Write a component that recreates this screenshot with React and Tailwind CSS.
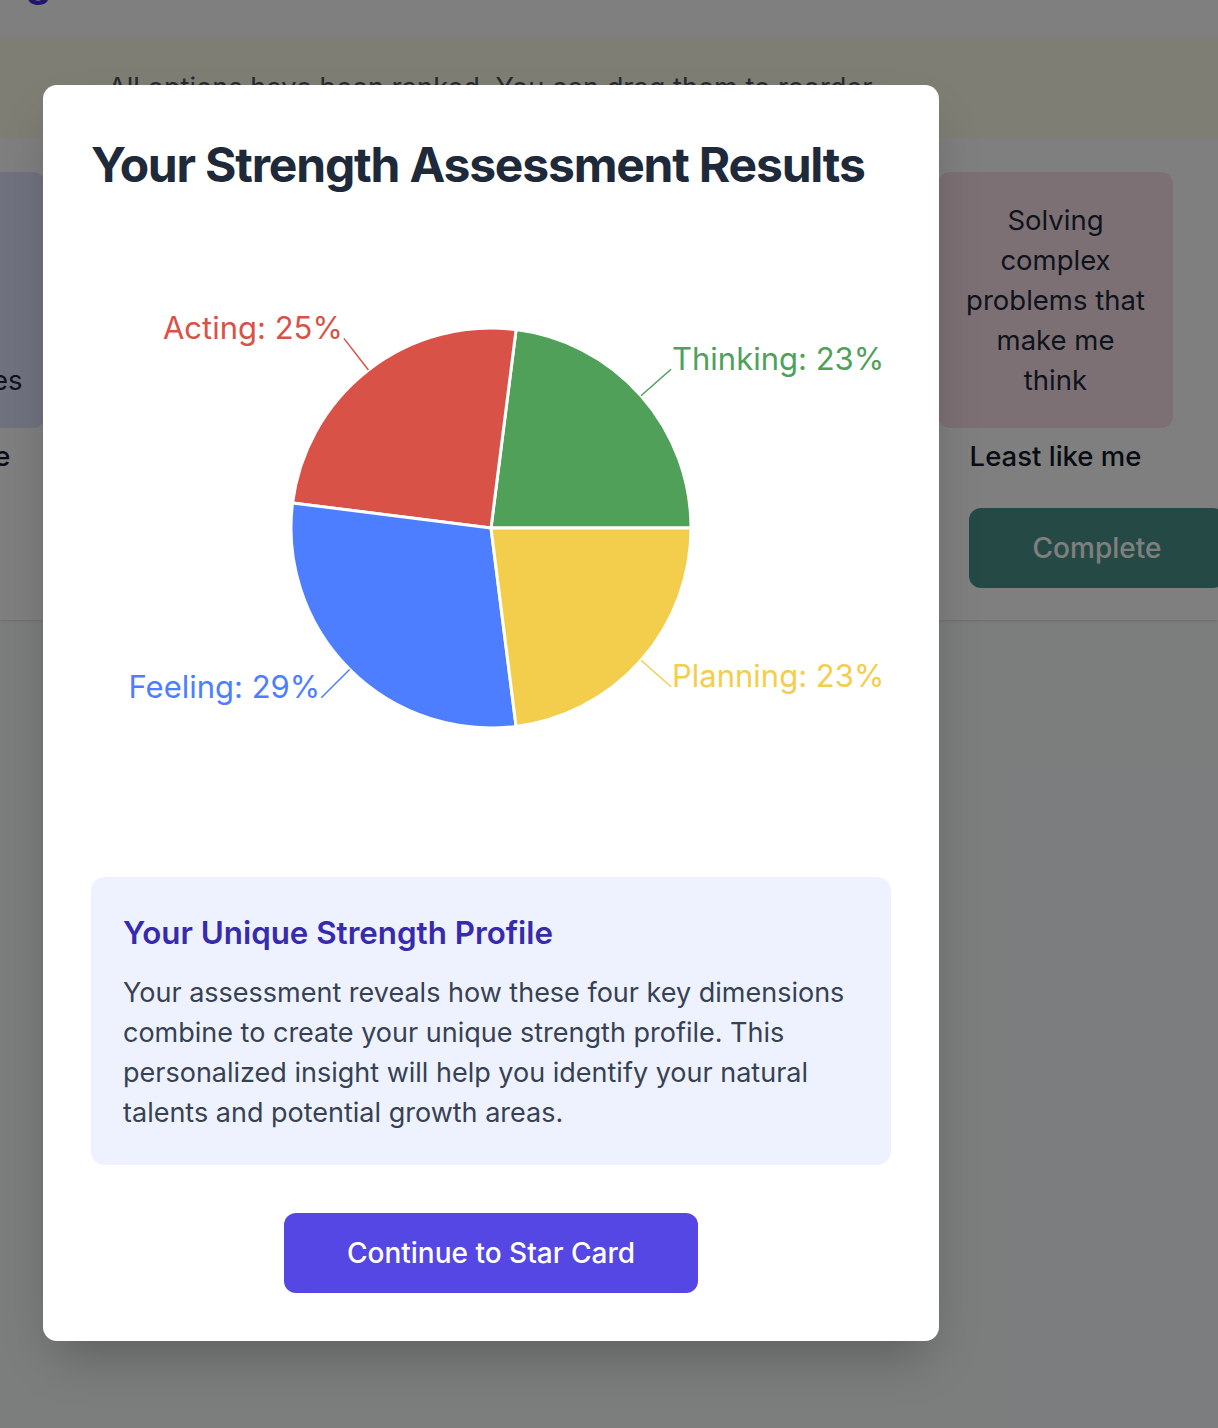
import React from "react";

const slices = [
  { name: "Thinking", pct: 23, color: "#50a05a" },
  { name: "Acting", pct: 25, color: "#d95247" },
  { name: "Feeling", pct: 29, color: "#4d7eff" },
  { name: "Planning", pct: 23, color: "#f3ce4c" },
];

function Pie() {
  const cx = 400, cy = 300, r = 200;
  let start = 0;
  const pt = (a, rad) => [cx + rad * Math.cos((a * Math.PI) / 180), cy - rad * Math.sin((a * Math.PI) / 180)];
  return (
    <svg width="800" height="600" viewBox="0 0 800 600" className="block">
      {slices.map((s) => {
        const sweep = (s.pct / 100) * 360;
        const a0 = start, a1 = start + sweep;
        start = a1;
        const [x0, y0] = pt(a0, r);
        const [x1, y1] = pt(a1, r);
        const large = sweep > 180 ? 1 : 0;
        const mid = (a0 + a1) / 2;
        const [lx0, ly0] = pt(mid, r);
        const [lx1, ly1] = pt(mid, r + 40);
        const right = Math.cos((mid * Math.PI) / 180) > 0;
        return (
          <g key={s.name}>
            <path
              d={`M ${cx} ${cy} L ${x0} ${y0} A ${r} ${r} 0 ${large} 0 ${x1} ${y1} Z`}
              fill={s.color}
              stroke="#ffffff"
              strokeWidth="3"
              strokeLinejoin="round"
            />
            <path d={`M ${lx0} ${ly0} L ${lx1} ${ly1}`} stroke={s.color} strokeWidth="1.5" fill="none" />
            <text
              x={right ? lx1 + 1 : lx1 - 1}
              y={ly1 - 11}
              textAnchor={right ? "start" : "end"}
              dominantBaseline="central"
              fill={s.color}
              style={{ fontFamily: "Inter, sans-serif", fontSize: "31px" }}
            >
              {`${s.name}: ${s.pct}%`}
            </text>
          </g>
        );
      })}
    </svg>
  );
}

const cards = [
  { lines: ["Making", "others feel", "heard and", "caring for", "my teammates"], bg: "bg-indigo-100", label: "Most like me" },
  { lines: ["Taking action", "and getting", "things done", "quickly and", "decisively"], bg: "bg-red-100", label: "" },
  { lines: ["Building trust", "and harmony", "with the", "people around", "me"], bg: "bg-blue-100", label: "" },
  { lines: ["Organizing", "tasks and", "making", "detailed", "plans"], bg: "bg-yellow-100", label: "" },
  { lines: ["Solving", "complex", "problems that", "make me", "think"], bg: "bg-[#f9e1e8]", label: "Least like me" },
];

export default function App() {
  return (
    <div className="relative w-[1218px] h-[1428px] overflow-hidden bg-gray-50 font-['Inter',sans-serif]">
      {/* background page */}
      <div className="bg-white shadow-sm">
        <div className="h-[38px] overflow-hidden">
          <div className="ml-[26px] -mt-[42px] text-[40px] font-bold text-indigo-700 leading-[48px]">g</div>
        </div>
        <div className="h-[100px] bg-yellow-50 flex items-center pl-[108px]">
          <p className="text-[27.2px] text-gray-600 leading-[40px]">All options have been ranked. You can drag them to reorder.</p>
        </div>
        <div className="pt-[34px] pb-[32px]">
          <div className="flex gap-[47px] -ml-[190px]">
            {cards.map((c, i) => (
              <div key={i} className="w-[235px] shrink-0 flex flex-col items-center">
                <div className={`w-[235px] h-[256px] rounded-xl ${c.bg} flex flex-col items-center justify-center`}>
                  {c.lines.map((l, j) => (
                    <p key={j} className="text-center text-[27.5px] leading-[40px] text-gray-800 whitespace-nowrap">{l}</p>
                  ))}
                </div>
                <div className="mt-2 h-[40px] text-[27.5px] leading-[40px] font-medium text-gray-900 whitespace-nowrap">{c.label}</div>
              </div>
            ))}
          </div>
          <div className="mt-8 ml-[969px] w-[256px] h-[80px] rounded-xl bg-[#4a948a] flex items-center justify-center text-[28px] font-medium text-white">
            Complete
          </div>
        </div>
      </div>

      {/* overlay */}
      <div className="absolute inset-0 bg-black/50" />

      {/* modal */}
      <div className="absolute left-[43px] top-[85px] w-[896px] bg-white rounded-[14px] shadow-2xl p-12">
        <h1 className="text-[48px] leading-[64px] font-bold text-gray-800 tracking-[-1.2px] whitespace-nowrap">Your Strength Assessment Results</h1>
        <div className="mt-[31px]">
          <Pie />
        </div>
        <div className="mt-[49px] bg-indigo-50 rounded-[14px] p-8">
          <h2 className="text-[31.3px] leading-[48px] font-semibold text-indigo-800">Your Unique Strength Profile</h2>
          <p className="mt-4 text-[27px] leading-[40px] text-gray-700">
            Your assessment reveals how these four key dimensions combine to create your unique strength profile. This
            personalized insight will help you identify your natural talents and potential growth areas.
          </p>
        </div>
        <div className="mt-12 flex justify-center">
          <button className="w-[414px] h-[80px] rounded-xl bg-[#5547e3] text-white text-[28px] font-medium">
            Continue to Star Card
          </button>
        </div>
      </div>
    </div>
  );
}
